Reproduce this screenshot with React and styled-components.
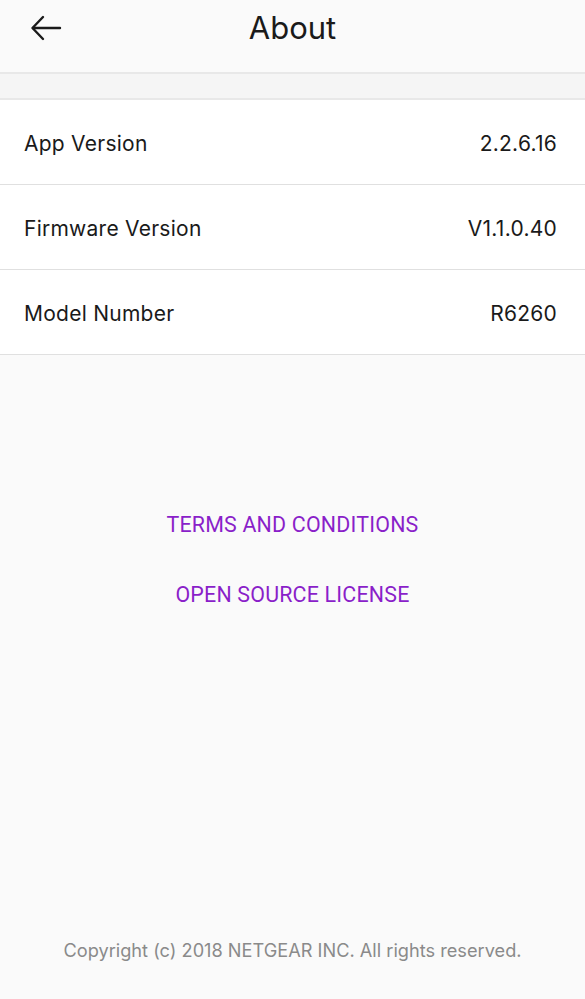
import styled, { createGlobalStyle } from "styled-components";

const GlobalStyle = createGlobalStyle`
  html, body {
    margin: 0;
    padding: 0;
    background: #fafafa;
  }
  body {
    font-family: Inter, "Noto Sans", sans-serif;
    -webkit-font-smoothing: antialiased;
  }
`;

const Page = styled.div`
  display: flex;
  flex-direction: column;
  height: 999px;
  background: #fafafa;
`;

const Header = styled.header`
  display: flex;
  align-items: center;
  justify-content: center;
  position: relative;
  height: 72px;
  background: #fafafa;
  border-bottom: 2px solid #e8e8e8;
`;

const BackButton = styled.button`
  position: absolute;
  left: 28px;
  top: 10px;
  width: 36px;
  height: 36px;
  padding: 0;
  border: none;
  background: none;
  display: flex;
  align-items: center;
  justify-content: center;
`;

const Title = styled.h1`
  margin: 0 0 18px;
  font-size: 31px;
  font-weight: 400;
  color: #1a1a1a;
`;

const Spacer = styled.div`
  height: 24px;
  background: #f5f5f5;
  border-bottom: 2px solid #e8e8e8;
`;

const List = styled.ul`
  list-style: none;
  margin: 0;
  padding: 0;
  background: #fff;
`;

const Row = styled.li`
  display: flex;
  align-items: center;
  justify-content: space-between;
  height: 85px;
  padding: 3px 28px 0 24px;
  box-sizing: border-box;
  border-bottom: 1px solid #e0e0e0;
  font-size: 21px;
  letter-spacing: 0.25px;
  color: #1a1a1a;
`;

const Links = styled.div`
  display: flex;
  flex-direction: column;
  align-items: center;
  gap: 45px;
  padding-top: 157px;
`;

const LinkText = styled.a`
  font-family: Roboto, "Noto Sans", sans-serif;
  font-size: 21.4px;
  color: #8a1fc9;
  text-decoration: none;
  letter-spacing: 0.2px;
`;

const Footer = styled.footer`
  margin-top: auto;
  padding-bottom: 38px;
  text-align: center;
  font-size: 18.2px;
  color: #8a8a8a;
`;

const rows = [
  ["App Version", "2.2.6.16"],
  ["Firmware Version", "V1.1.0.40"],
  ["Model Number", "R6260"],
];

export default function App() {
  return (
    <Page>
      <GlobalStyle />
      <Header>
        <BackButton aria-label="Back">
          <svg width="32" height="28" viewBox="0 0 32 28" fill="none" stroke="#1a1a1a" strokeWidth="2.4" strokeLinecap="round" strokeLinejoin="round">
            <path d="M30 14H3" />
            <path d="M13 3L2.5 14L13 25" />
          </svg>
        </BackButton>
        <Title>About</Title>
      </Header>
      <Spacer />
      <List>
        {rows.map(([label, value]) => (
          <Row key={label}>
            <span>{label}</span>
            <span>{value}</span>
          </Row>
        ))}
      </List>
      <Links>
        <LinkText href="#">TERMS AND CONDITIONS</LinkText>
        <LinkText href="#">OPEN SOURCE LICENSE</LinkText>
      </Links>
      <Footer>Copyright (c) 2018 NETGEAR INC. All rights reserved.</Footer>
    </Page>
  );
}
